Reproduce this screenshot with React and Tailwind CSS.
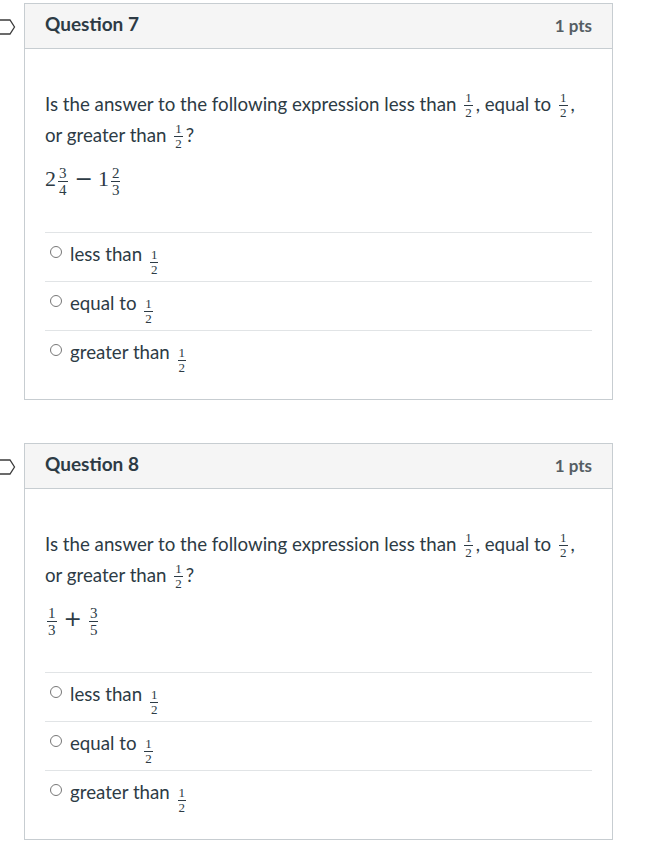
import React from "react";

const SERIF = { fontFamily: '"Liberation Serif", "DejaVu Serif", serif' };
const OPF = { fontFamily: '"DejaVu Sans", sans-serif' };

function Frac({ n, d, va = "9px" }) {
  return (
    <span
      className="inline-flex flex-col items-center mx-[3px] text-[13px] leading-[12px] text-[#2d3b45]"
      style={{ ...SERIF, verticalAlign: va }}
    >
      <span className="px-[1px]">{n}</span>
      <span className="block w-full h-px bg-[#2d3b45] mt-[1px] mb-[1px]" />
      <span className="px-[1px]">{d}</span>
    </span>
  );
}

function MathFrac({ n, d }) {
  return (
    <span
      className="flex flex-col items-center mx-[2px] text-[15px] leading-[13px] text-[#2d3b45] mt-[3px]"
      style={SERIF}
    >
      <span className="px-[1px]">{n}</span>
      <span className="block w-full h-px bg-[#2d3b45] mt-[1px] mb-[2px]" />
      <span className="px-[1px]">{d}</span>
    </span>
  );
}

function Tag() {
  return (
    <svg width="16" height="16" viewBox="0 0 16 16" className="shrink-0 block">
      <path d="M-4 1 H10 L14.5 8 L10 15 H-4" fill="none" stroke="#3b3b3b" strokeWidth="1.3" strokeLinejoin="miter" />
    </svg>
  );
}

function Radio() {
  return (
    <span className="inline-block w-[12px] h-[12px] rounded-full border border-[#777] bg-white shrink-0 mt-[-10px]" />
  );
}

function Answer({ label }) {
  return (
    <div className="flex items-center h-[49px] border-t border-[#e1e4e6] pl-[5px] gap-[8px]">
      <Radio />
      <span className="text-[18.7px] leading-[24px] text-[#2d3b45] mt-[4px]">
        {label} <Frac n="1" d="2" va="2px" />
      </span>
    </div>
  );
}

function Question({ num, expr }) {
  return (
    <div className="flex items-start">
      <div className="w-[24px] pt-[16px]">
        <Tag />
      </div>
      <div className="w-[589px] border border-[#c7cdd1] bg-white">
        <div className="h-[45px] bg-[#f5f5f5] border-b border-[#c7cdd1] flex items-center justify-between px-[20px]">
          <span className="text-[19px] font-bold text-[#2d3b45] mt-[-3px]">Question {num}</span>
          <span className="text-[17px] font-bold text-[#555e64]">1 pts</span>
        </div>
        <div className="px-[20px] pt-[40px] pb-[20px]">
          <div className="text-[18.7px] leading-[31px] text-[#2d3b45]">
            Is the answer to the following expression less than <Frac n="1" d="2" />, equal to{" "}
            <Frac n="1" d="2" />, or greater than <Frac n="1" d="2" />?
          </div>
          <div className="mt-[12px] mb-[35px] h-[34px] flex items-center">{expr}</div>
          <div>
            <Answer label="less than" />
            <Answer label="equal to" />
            <Answer label="greater than" />
          </div>
        </div>
      </div>
    </div>
  );
}

function Digit({ children }) {
  return (
    <span className="text-[22px] leading-[24px] text-[#2d3b45] mt-[-2px]" style={SERIF}>
      {children}
    </span>
  );
}

function Op({ children }) {
  return (
    <span className="text-[22px] leading-[24px] text-[#2d3b45] mx-[5px] mt-[-2px]" style={OPF}>
      {children}
    </span>
  );
}

export default function App() {
  const expr7 = (
    <span className="flex items-center">
      <Digit>2</Digit>
      <MathFrac n="3" d="4" />
      <Op>−</Op>
      <Digit>1</Digit>
      <MathFrac n="2" d="3" />
    </span>
  );
  const expr8 = (
    <span className="flex items-center">
      <MathFrac n="1" d="3" />
      <Op>+</Op>
      <MathFrac n="3" d="5" />
    </span>
  );
  return (
    <div
      className="w-[664px] min-h-[857px] bg-white pt-[3px]"
      style={{ fontFamily: 'Lato, "Noto Sans", sans-serif' }}
    >
      <div className="flex flex-col gap-[43px]">
        <Question num={7} expr={expr7} />
        <Question num={8} expr={expr8} />
      </div>
    </div>
  );
}
